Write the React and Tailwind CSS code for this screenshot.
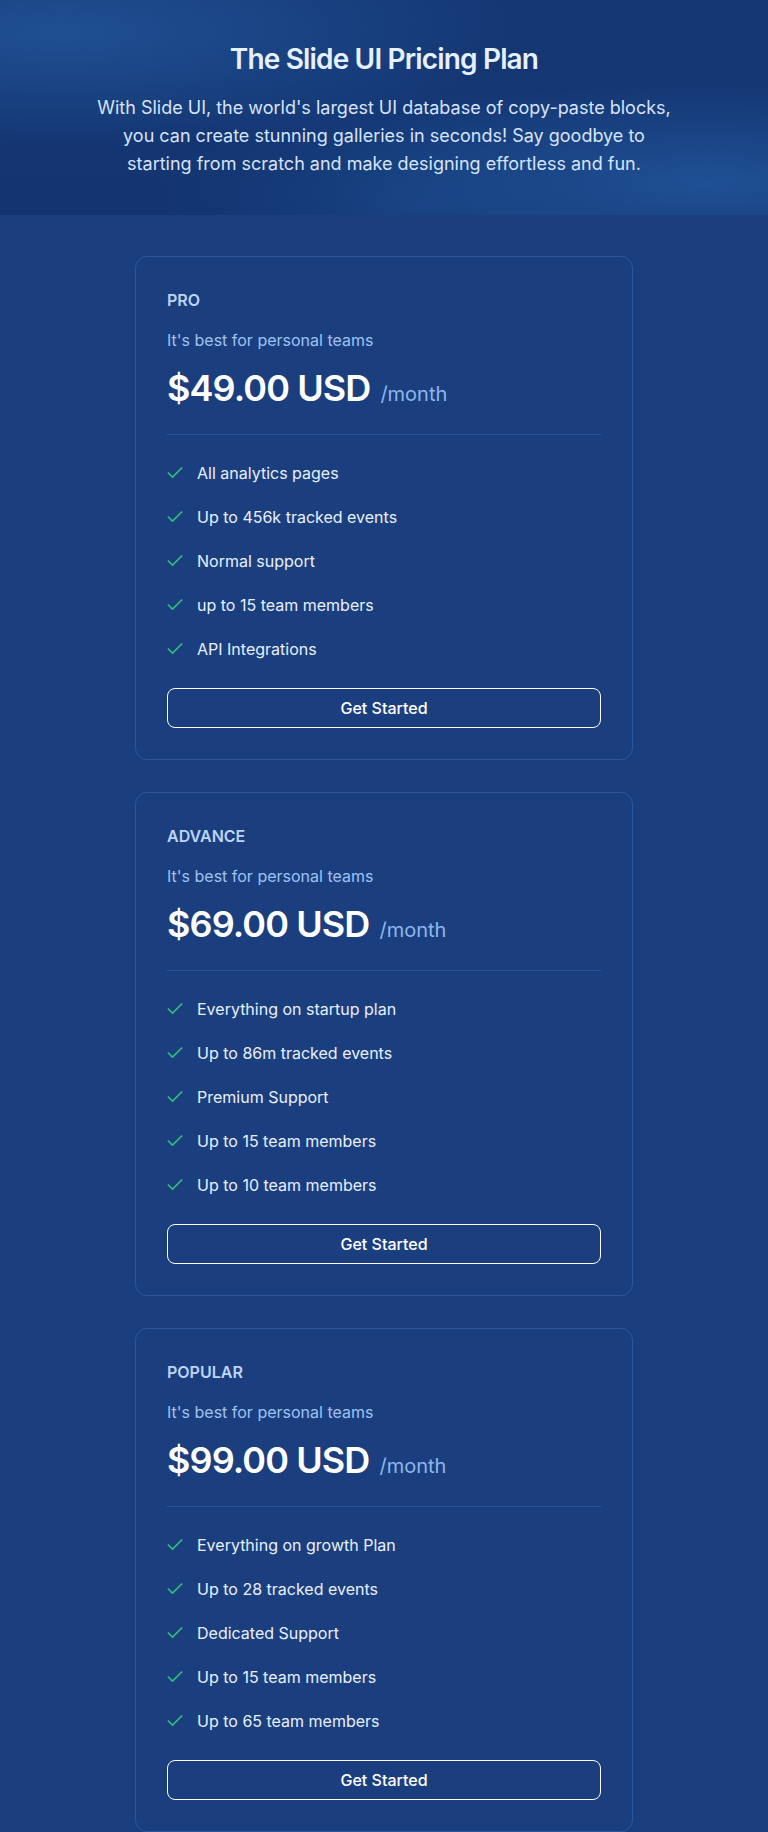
import { Check } from "lucide-react";

const plans = [
  {
    name: "PRO",
    price: "$49.00 USD",
    features: [
      "All analytics pages",
      "Up to 456k tracked events",
      "Normal support",
      "up to 15 team members",
      "API Integrations",
    ],
  },
  {
    name: "ADVANCE",
    price: "$69.00 USD",
    features: [
      "Everything on startup plan",
      "Up to 86m tracked events",
      "Premium Support",
      "Up to 15 team members",
      "Up to 10 team members",
    ],
  },
  {
    name: "POPULAR",
    price: "$99.00 USD",
    features: [
      "Everything on growth Plan",
      "Up to 28 tracked events",
      "Dedicated Support",
      "Up to 15 team members",
      "Up to 65 team members",
    ],
  },
];

const PlanCard = ({ plan }) => (
  <div className="w-[498px] rounded-xl border border-[#2b56a0] bg-[#1b3f7e] p-[31px]">
    <p className="text-base leading-6 font-semibold text-[#bcd5f8]">{plan.name}</p>
    <p className="mt-4 text-base leading-6 text-[#9fc2f3]">It's best for personal teams</p>
    <div className="mt-4 flex items-baseline gap-2.5">
      <span className="text-4xl leading-10 font-semibold tracking-tight text-white">{plan.price}</span>
      <span className="text-xl text-[#8db6ee]">/month</span>
    </div>

    <div className="mt-[26px] h-px bg-[#2a54a0]"></div>

    <ul className="mt-[26px] flex flex-col gap-5">
      {plan.features.map((f) => (
        <li key={f} className="flex items-center gap-3 text-base leading-6 text-[#e8effc]">
          <Check size={20} strokeWidth={2} className="-ml-0.5 text-[#2fbf7a]" />
          <span>{f}</span>
        </li>
      ))}
    </ul>

    <button className="mt-[27px] h-10 w-full rounded-lg border border-white text-base font-medium text-white">
      Get Started
    </button>
  </div>
);

export default function App() {
  return (
    <div className="min-h-screen bg-[#1b3f7e] font-['Inter',sans-serif]">
      {/* HEADER */}
      <header className="bg-[#133470] bg-[radial-gradient(ellipse_at_8%_15%,#1f4f92_0%,transparent_45%),radial-gradient(ellipse_at_92%_85%,#1f5094_0%,transparent_40%),radial-gradient(ellipse_at_55%_95%,#17407f_0%,transparent_45%),linear-gradient(180deg,#153875,#133470)] px-4 pt-[43px] pb-[37px] text-center">
        <h1 className="text-[28px] leading-8 font-semibold tracking-[-0.03em] text-[#e6f0ff]">
          The Slide UI Pricing Plan
        </h1>
        <p className="mx-auto mt-[19px] max-w-[576px] text-lg leading-7 text-[#d7e3f8]">
          With Slide UI, the world's largest UI database of copy-paste blocks, you can create
          stunning galleries in seconds! Say goodbye to starting from scratch and make designing
          effortless and fun.
        </p>
      </header>

      {/* PLANS */}
      <main className="flex flex-col items-center gap-8 pt-[41px] pb-10">
        {plans.map((p) => (
          <PlanCard key={p.name} plan={p} />
        ))}
      </main>
    </div>
  );
}
